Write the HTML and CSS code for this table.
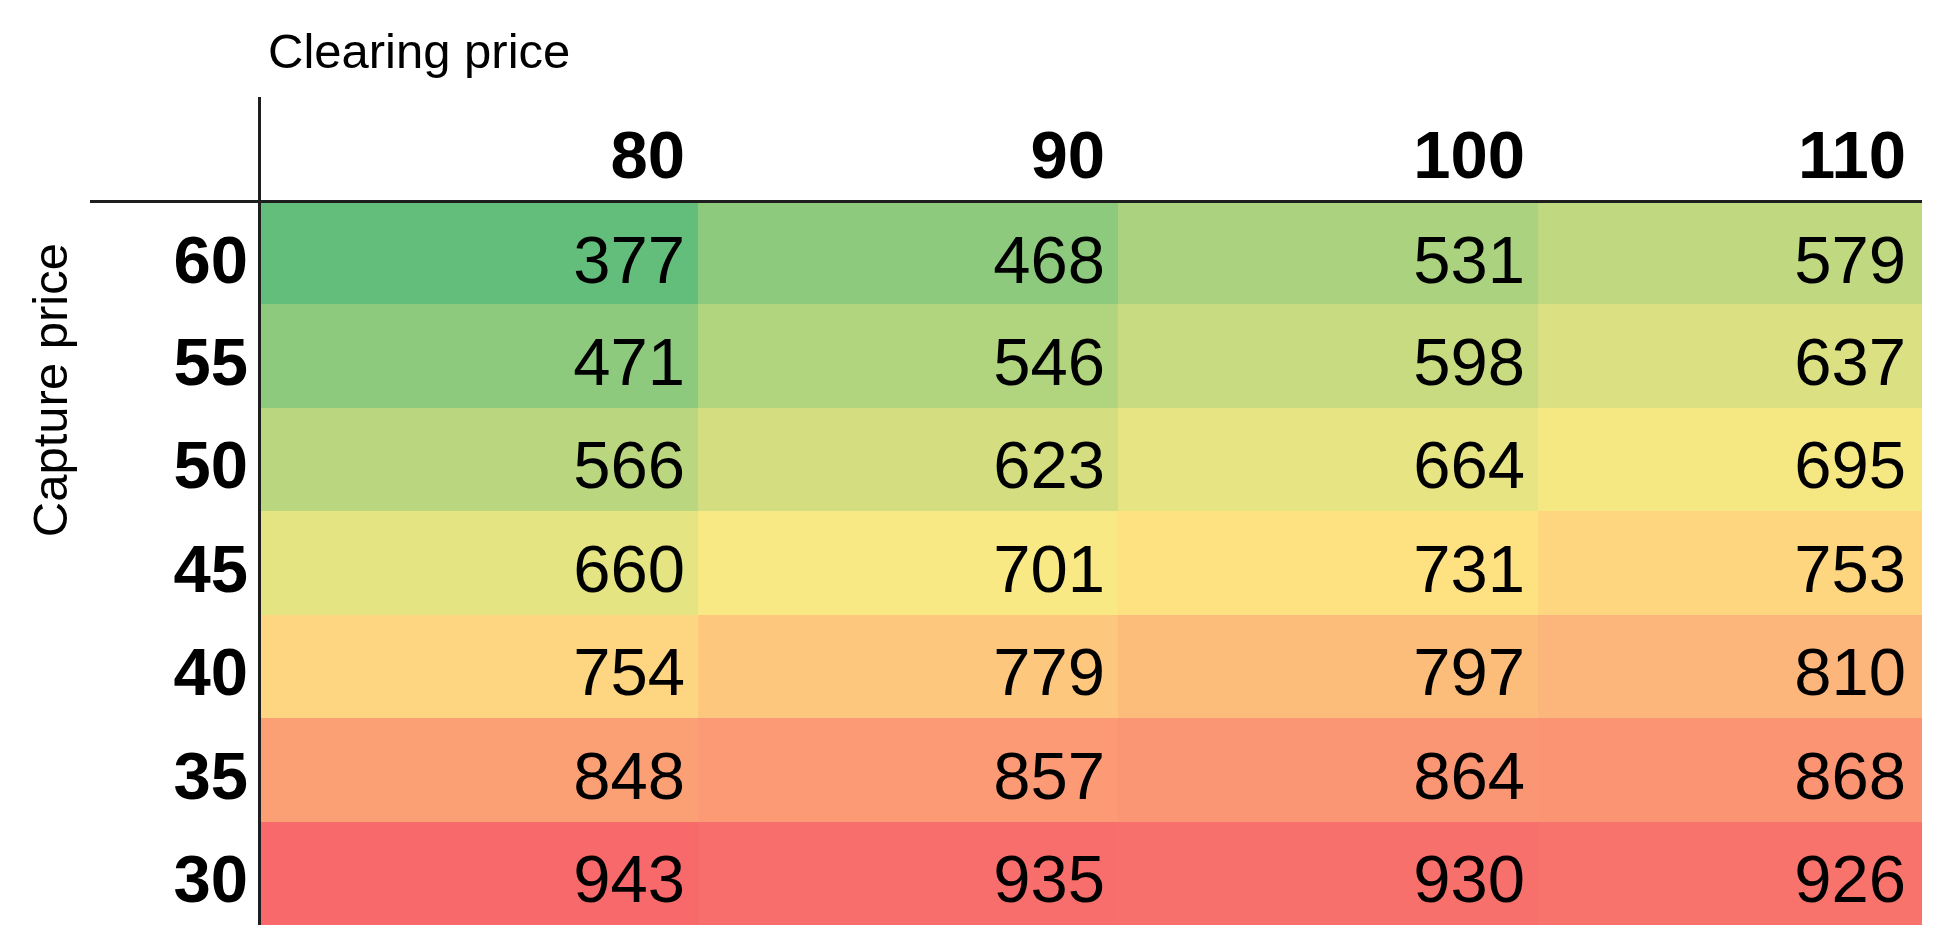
FILE: index.html
```html
<!DOCTYPE html>
<html lang="en">
<head>
<meta charset="utf-8">
<title>Clearing price vs Capture price</title>
<link rel="stylesheet" href="styles.css">
</head>
<body>
<div class="chart">
  <div class="title">Clearing price</div>
  <div class="main">
    <div class="ylabel"><span>Capture price</span></div>
    <div class="grid">
      <div class="corner"></div>
      <div class="head">80</div>
      <div class="head">90</div>
      <div class="head">100</div>
      <div class="head last">110</div>

      <div class="rlabel first">60</div>
      <div class="cell first" style="background:#63be7b">377</div>
      <div class="cell first" style="background:#8dca7d">468</div>
      <div class="cell first" style="background:#aad27f">531</div>
      <div class="cell first last" style="background:#c0d980">579</div>

      <div class="rlabel">55</div>
      <div class="cell" style="background:#8eca7d">471</div>
      <div class="cell" style="background:#b1d47f">546</div>
      <div class="cell" style="background:#c9db81">598</div>
      <div class="cell last" style="background:#dbe082">637</div>

      <div class="rlabel">50</div>
      <div class="cell" style="background:#bad780">566</div>
      <div class="cell" style="background:#d4de81">623</div>
      <div class="cell" style="background:#e7e483">664</div>
      <div class="cell last" style="background:#f5e883">695</div>

      <div class="rlabel">45</div>
      <div class="cell" style="background:#e5e482">660</div>
      <div class="cell" style="background:#f8e984">701</div>
      <div class="cell" style="background:#fee282">731</div>
      <div class="cell last" style="background:#fed680">753</div>

      <div class="rlabel">40</div>
      <div class="cell" style="background:#fed580">754</div>
      <div class="cell" style="background:#fdc77d">779</div>
      <div class="cell" style="background:#fcbd7b">797</div>
      <div class="cell last" style="background:#fcb57a">810</div>

      <div class="rlabel">35</div>
      <div class="cell" style="background:#fb9f75">848</div>
      <div class="cell" style="background:#fb9a74">857</div>
      <div class="cell" style="background:#fa9674">864</div>
      <div class="cell last" style="background:#fa9473">868</div>

      <div class="rlabel">30</div>
      <div class="cell" style="background:#f8696b">943</div>
      <div class="cell" style="background:#f86e6c">935</div>
      <div class="cell" style="background:#f8706c">930</div>
      <div class="cell last" style="background:#f9736d">926</div>
    </div>
  </div>
</div>
</body>
</html>
```
FILE: styles.css
```css
html, body {
  margin: 0;
  padding: 0;
  background: #ffffff;
}

body {
  font-family: "Liberation Sans", Arial, sans-serif;
  color: #000000;
}

.chart {
  width: 1953px;
  height: 950px;
  box-sizing: border-box;
  padding-top: 27px;
}

.title {
  margin-left: 268px;
  font-size: 49px;
  line-height: 48px;
  height: 48px;
  margin-bottom: 22px;
}

.main {
  display: flex;
  align-items: flex-start;
}

.ylabel {
  width: 90px;
  box-sizing: border-box;
  padding-left: 26px;
  padding-top: 146px;
}

.ylabel span {
  display: block;
  writing-mode: vertical-rl;
  transform: rotate(180deg);
  font-size: 49px;
  line-height: 48px;
  white-space: nowrap;
}

.grid {
  display: grid;
  grid-template-columns: 171px 437px 420px 420px 384px;
  grid-template-rows: 106px 101px repeat(6, 103.5px);
  font-size: 67px;
  line-height: 67px;
}

.corner,
.head,
.rlabel,
.cell {
  box-sizing: border-box;
  display: flex;
  align-items: center;
  justify-content: flex-end;
  padding-right: 13px;
  padding-top: 11px;
}

.corner {
  border-right: 3px solid #1e1e1e;
  border-bottom: 3px solid #1e1e1e;
}

.head {
  border-bottom: 3px solid #1e1e1e;
  font-weight: bold;
}

.rlabel {
  border-right: 3px solid #1e1e1e;
  font-weight: bold;
  padding-right: 10px;
}

.head.last,
.cell.last {
  padding-right: 16px;
}
```
